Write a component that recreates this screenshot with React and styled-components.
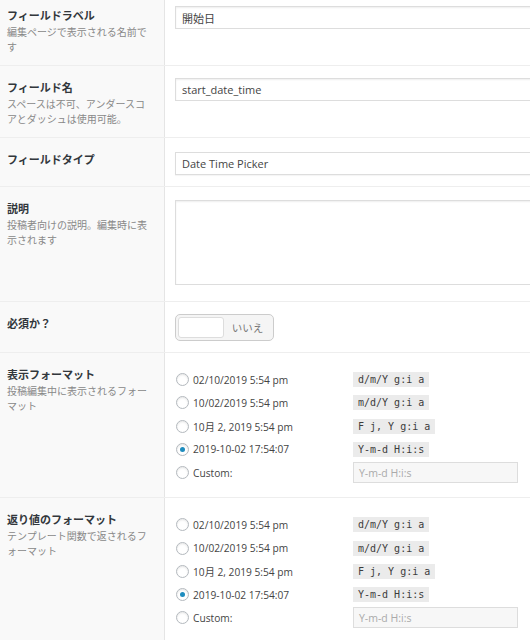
import React from 'react';
import styled, { createGlobalStyle } from 'styled-components';

const GlobalStyle = createGlobalStyle`
  html, body {
    margin: 0;
    padding: 0;
    background: #fff;
    overflow: hidden;
  }
  body {
    font-family: "Open Sans", "Noto Sans CJK JP", sans-serif;
    color: #333;
  }
`;

const Page = styled.div`
  width: 530px;
  overflow: hidden;
`;

const Table = styled.div`
  width: 550px;
  margin-top: -6px;
`;

const Row = styled.div`
  display: grid;
  grid-template-columns: 165px 1fr;
  border-bottom: 1px solid #eee;
`;

const LabelCell = styled.div`
  background: #f9f9f9;
  border-right: 1px solid #e5e5e5;
  padding: 12px 10px 11px 7px;
`;

const Label = styled.div`
  font-family: "Noto Sans CJK JP", sans-serif;
  font-weight: 700;
  font-size: 11px;
  line-height: 18px;
  color: #32373c;
`;

const Desc = styled.div`
  font-family: "Noto Sans CJK JP", sans-serif;
  font-size: 10px;
  line-height: 15px;
  color: #888;
  line-break: loose;
`;

const InputCell = styled.div`
  padding: 12px 0 11px 10px;
`;

const TextInput = styled.input`
  display: block;
  box-sizing: border-box;
  width: 100%;
  height: 23px;
  margin: 0;
  padding: 0 6px;
  border: 1px solid #ddd;
  box-shadow: inset 0 1px 2px rgba(0, 0, 0, 0.07);
  background: #fff;
  font-family: "Open Sans", "Noto Sans CJK JP", sans-serif;
  font-size: 11px;
  color: #444;
  outline: none;
`;

const SelectBox = styled.div`
  box-sizing: border-box;
  height: 23px;
  margin-top: 2px;
  padding: 0 6px;
  border: 1px solid #ddd;
  box-shadow: 0 1px 1px rgba(0, 0, 0, 0.04);
  background: #fff;
  display: flex;
  align-items: center;
  font-size: 11px;
  color: #444;
`;

const TextArea = styled.textarea`
  display: block;
  box-sizing: border-box;
  width: 100%;
  height: 85px;
  margin: 1px 0 5px;
  border: 1px solid #ddd;
  box-shadow: inset 0 1px 2px rgba(0, 0, 0, 0.07);
  background: #fff;
  resize: none;
  outline: none;
`;

const Toggle = styled.div`
  display: flex;
  align-items: stretch;
  box-sizing: border-box;
  width: 99px;
  height: 27px;
  padding: 2px;
  border: 1px solid #ccc;
  border-radius: 5px;
  background: #f5f5f5;
`;

const Handle = styled.div`
  width: 46px;
  box-sizing: border-box;
  border: 1px solid #ddd;
  border-radius: 3px;
  background: #fff;
`;

const ToggleText = styled.div`
  flex: 1;
  display: flex;
  align-items: center;
  justify-content: center;
  font-family: "Noto Sans CJK JP", sans-serif;
  font-size: 10.5px;
  color: #777;
`;

const RadioList = styled.ul`
  list-style: none;
  margin: 0;
  padding: 3px 0 2px;
`;

const RadioItem = styled.li`
  display: grid;
  grid-template-columns: 178px auto;
  align-items: center;
  height: 23.25px;
`;

const RadioLabel = styled.label`
  display: flex;
  align-items: center;
  gap: 4px;
  font-size: 10.2px;
  color: #444;
`;

const Circle = styled.span`
  box-sizing: border-box;
  width: 13px;
  height: 13px;
  margin-left: 1px;
  border: 1px solid #b4b9be;
  border-radius: 50%;
  background: #fff;
  box-shadow: inset 0 1px 2px rgba(0, 0, 0, 0.1);
  display: flex;
  align-items: center;
  justify-content: center;

  &::before {
    content: "";
    width: 5px;
    height: 5px;
    border-radius: 50%;
    background: ${(props) => (props.$checked ? '#1e8cbe' : 'transparent')};
  }
`;

const Code = styled.code`
  justify-self: start;
  height: 15px;
  line-height: 15px;
  padding: 0 5px;
  background: #ebebeb;
  font-family: "DejaVu Sans Mono", "Liberation Mono", monospace;
  font-size: 10px;
  color: #3c3c3c;
`;

const CustomInput = styled.div`
  justify-self: start;
  box-sizing: border-box;
  width: 165px;
  height: 21px;
  padding: 0 5px;
  border: 1px solid #ddd;
  background: #f7f7f7;
  display: flex;
  align-items: center;
  font-size: 10.5px;
  color: #aaa;
`;

const formats = [
  { text: '02/10/2019 5:54 pm', code: 'd/m/Y g:i a' },
  { text: '10/02/2019 5:54 pm', code: 'm/d/Y g:i a' },
  { text: '10月 2, 2019 5:54 pm', code: 'F j, Y g:i a' },
  { text: '2019-10-02 17:54:07', code: 'Y-m-d H:i:s', checked: true },
];

const FormatList = () => (
  <RadioList>
    {formats.map((f, i) => (
      <RadioItem key={i}>
        <RadioLabel>
          <Circle $checked={f.checked} />
          {f.text}
        </RadioLabel>
        <Code>{f.code}</Code>
      </RadioItem>
    ))}
    <RadioItem>
      <RadioLabel>
        <Circle />
        Custom:
      </RadioLabel>
      <CustomInput>Y-m-d H:i:s</CustomInput>
    </RadioItem>
  </RadioList>
);

const App = () => {
  return (
    <Page>
      <GlobalStyle />
      <Table>
        <Row>
          <LabelCell>
            <Label>フィールドラベル</Label>
            <Desc>編集ページで表示される名前です</Desc>
          </LabelCell>
          <InputCell>
            <TextInput defaultValue="開始日" readOnly />
          </InputCell>
        </Row>
        <Row>
          <LabelCell>
            <Label>フィールド名</Label>
            <Desc>スペースは不可、アンダースコアとダッシュは使用可能。</Desc>
          </LabelCell>
          <InputCell>
            <TextInput defaultValue="start_date_time" readOnly />
          </InputCell>
        </Row>
        <Row>
          <LabelCell>
            <Label>フィールドタイプ</Label>
          </LabelCell>
          <InputCell>
            <SelectBox>Date Time Picker</SelectBox>
          </InputCell>
        </Row>
        <Row>
          <LabelCell>
            <Label>説明</Label>
            <Desc>投稿者向けの説明。編集時に表示されます</Desc>
          </LabelCell>
          <InputCell>
            <TextArea readOnly />
          </InputCell>
        </Row>
        <Row>
          <LabelCell>
            <Label>必須か？</Label>
          </LabelCell>
          <InputCell>
            <Toggle>
              <Handle />
              <ToggleText>いいえ</ToggleText>
            </Toggle>
          </InputCell>
        </Row>
        <Row>
          <LabelCell>
            <Label>表示フォーマット</Label>
            <Desc>投稿編集中に表示されるフォーマット</Desc>
          </LabelCell>
          <InputCell>
            <FormatList />
          </InputCell>
        </Row>
        <Row>
          <LabelCell>
            <Label>返り値のフォーマット</Label>
            <Desc>テンプレート関数で返されるフォーマット</Desc>
          </LabelCell>
          <InputCell>
            <FormatList />
          </InputCell>
        </Row>
      </Table>
    </Page>
  );
};

export default App;
